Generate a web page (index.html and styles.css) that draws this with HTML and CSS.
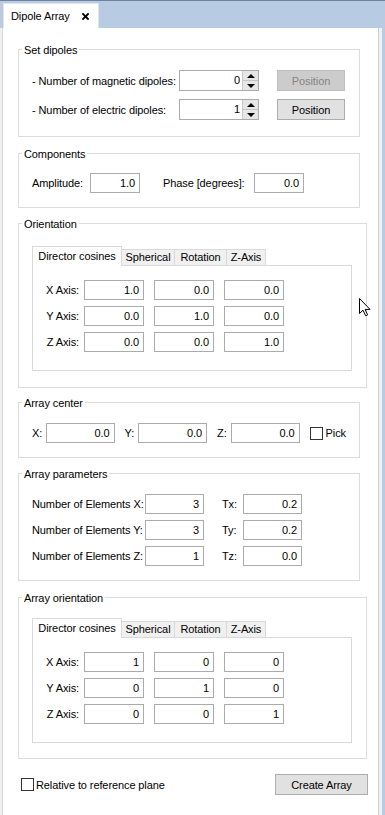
FILE: index.html
```html
<!DOCTYPE html>
<html>
<head>
<meta charset="utf-8">
<link rel="stylesheet" href="styles.css">
</head>
<body>
<div class="window">
  <div class="tabbar">
    <div class="tab">
      <span class="tab-text">Dipole Array</span>
      <svg class="close" width="7" height="7" viewBox="0 0 7 7"><path d="M1 1 L6 6 M6 1 L1 6" stroke="#000" stroke-width="1.8" stroke-linecap="square"/></svg>
    </div>
  </div>
  <div class="main">
    <div class="panel">

      <div class="group g-dipoles">
        <div class="title">Set dipoles</div>
        <div class="row dip-row first">
          <span class="lbl dip-lbl">- Number of magnetic dipoles:</span>
          <div class="spin"><span class="spin-val">0</span><div class="arrows"><span class="arr"><i class="tri up"></i></span><span class="arr"><i class="tri down"></i></span></div></div>
          <button class="btn pos disabled">Position</button>
        </div>
        <div class="row dip-row second">
          <span class="lbl dip-lbl">- Number of electric dipoles:</span>
          <div class="spin"><span class="spin-val">1</span><div class="arrows"><span class="arr"><i class="tri up"></i></span><span class="arr"><i class="tri down"></i></span></div></div>
          <button class="btn pos">Position</button>
        </div>
      </div>

      <div class="group g-comp">
        <div class="title">Components</div>
        <div class="row comp-row">
          <span class="lbl amp-lbl">Amplitude:</span>
          <div class="field f50">1.0</div>
          <span class="lbl phase-lbl">Phase [degrees]:</span>
          <div class="field f50">0.0</div>
        </div>
      </div>

      <div class="group wide g-orient">
        <div class="title">Orientation</div>
        <div class="tabwidget tw1">
          <div class="tabs">
            <div class="t active t-dc">Director cosines</div>
            <div class="t t-sph">Spherical</div>
            <div class="t t-rot">Rotation</div>
            <div class="t t-z">Z-Axis</div>
          </div>
          <div class="pane">
            <div class="row axis-row"><span class="lbl axis-lbl">X Axis:</span><div class="field f60">1.0</div><div class="field f60">0.0</div><div class="field f60">0.0</div></div>
            <div class="row axis-row"><span class="lbl axis-lbl">Y Axis:</span><div class="field f60">0.0</div><div class="field f60">1.0</div><div class="field f60">0.0</div></div>
            <div class="row axis-row"><span class="lbl axis-lbl">Z Axis:</span><div class="field f60">0.0</div><div class="field f60">0.0</div><div class="field f60">1.0</div></div>
          </div>
        </div>
      </div>

      <div class="group g-center">
        <div class="title">Array center</div>
        <div class="row center-row">
          <span class="lbl xyz-lbl">X:</span><div class="field f69">0.0</div>
          <span class="lbl xyz-lbl gap">Y:</span><div class="field f69">0.0</div>
          <span class="lbl xyz-lbl gap">Z:</span><div class="field f69">0.0</div>
          <span class="check pick-check"></span><span class="lbl pick-lbl">Pick</span>
        </div>
      </div>

      <div class="group g-params">
        <div class="title">Array parameters</div>
        <div class="row par-row"><span class="lbl num-lbl">Number of Elements X:</span><div class="field f59">3</div><span class="lbl t-lbl">Tx:</span><div class="field f59">0.2</div></div>
        <div class="row par-row"><span class="lbl num-lbl">Number of Elements Y:</span><div class="field f59">3</div><span class="lbl t-lbl">Ty:</span><div class="field f59">0.2</div></div>
        <div class="row par-row"><span class="lbl num-lbl">Number of Elements Z:</span><div class="field f59">1</div><span class="lbl t-lbl">Tz:</span><div class="field f59">0.0</div></div>
      </div>

      <div class="group wide g-aorient">
        <div class="title">Array orientation</div>
        <div class="tabwidget tw2">
          <div class="tabs">
            <div class="t active t-dc">Director cosines</div>
            <div class="t t-sph">Spherical</div>
            <div class="t t-rot">Rotation</div>
            <div class="t t-z">Z-Axis</div>
          </div>
          <div class="pane">
            <div class="row axis-row"><span class="lbl axis-lbl">X Axis:</span><div class="field f60">1</div><div class="field f60">0</div><div class="field f60">0</div></div>
            <div class="row axis-row"><span class="lbl axis-lbl">Y Axis:</span><div class="field f60">0</div><div class="field f60">1</div><div class="field f60">0</div></div>
            <div class="row axis-row"><span class="lbl axis-lbl">Z Axis:</span><div class="field f60">0</div><div class="field f60">0</div><div class="field f60">1</div></div>
          </div>
        </div>
      </div>

      <div class="bottom">
        <div class="rel"><span class="check"></span><span class="lbl rel-lbl">Relative to reference plane</span></div>
        <button class="btn create">Create Array</button>
      </div>

    </div>
    <div class="edge"></div>
  </div>
  <svg class="cursor" width="13" height="19" viewBox="0 0 13 19"><path d="M0.5 0.5 V15.5 L4 12.2 L6.6 17.8 L8.6 16.9 L6.1 11.4 H11 Z" fill="#fff" stroke="#000" stroke-width="1" stroke-linejoin="miter"/></svg>
</div>
</body>
</html>
```

FILE: styles.css
```css
* { box-sizing: border-box; }
html, body { margin: 0; padding: 0; }
body {
  font-family: "Liberation Sans", Arial, sans-serif;
  font-size: 11px;
  letter-spacing: -0.1px;
  color: #000;
  background: #fff;
}
.window {
  position: relative;
  width: 385px;
  height: 815px;
  overflow: hidden;
  background: #b7cbe3;
}
.tabbar {
  height: 28px;
  border-top: 1px solid #6f819c;
  background: #b7cbe3;
  padding: 2px 0 0 3px;
}
.tab {
  width: 96px;
  height: 25px;
  background: #fff;
  border: 1px solid #e4e4e4;
  border-bottom: none;
  display: flex;
  align-items: center;
  padding-left: 7px;
}
.tab-text { line-height: 14px; }
.close { margin-left: 12px; display: block; }

.main {
  display: flex;
  height: 787px;
  background: #f0f0f0;
}
.panel {
  width: 377px;
  margin-left: 2px;
  background: #fff;
  border-left: 1px solid #dadada;
  border-right: 1px solid #cfcfcf;
  padding-left: 15px;
}
.edge {
  width: 6px;
  background: #b7cbe3;
  border-left: 3px solid #f0f0f0;
}

.group {
  width: 342px;
  border: 1px solid #dcdcdc;
  padding: 0 13px;
}
.group.wide { width: 349px; }
.title {
  width: max-content;
  background: #fff;
  margin: -7px 0 0 -10px;
  padding: 0 2px;
  line-height: 14px;
  height: 14px;
}
.row { display: flex; align-items: center; }
.lbl { white-space: nowrap; line-height: 14px; }

.field {
  height: 20px;
  border: 1px solid #ababab;
  background: #fff;
  text-align: right;
  padding-right: 4px;
  line-height: 18px;
  flex: none;
}
.f50 { width: 50px; }
.f59 { width: 59px; }
.f60 { width: 60px; }
.f69 { width: 69px; }

/* Set dipoles */
.g-dipoles { margin-top: 21px; padding-bottom: 16px; }
.dip-row { height: 21px; }
.dip-row.first { margin-top: 13px; }
.dip-row.second { margin-top: 8px; }
.dip-lbl { width: 147px; }
.spin {
  width: 80px;
  height: 21px;
  border: 1px solid #ababab;
  display: flex;
  background: #fff;
}
.spin-val {
  flex: 1;
  text-align: right;
  padding-right: 2px;
  line-height: 19px;
}
.arrows {
  width: 16px;
  display: flex;
  flex-direction: column;
  background: #e6e6e6;
  border-left: 1px solid #c9c9c9;
}
.arr {
  flex: 1;
  display: flex;
  align-items: center;
  justify-content: center;
}
.arr + .arr { border-top: 1px solid #c4c4c4; }
.tri { display: block; width: 0; height: 0; border-left: 4px solid transparent; border-right: 4px solid transparent; }
.tri.up { border-bottom: 4px solid #000; }
.tri.down { border-top: 4px solid #000; }

.btn {
  font-family: inherit;
  font-size: 11px;
  letter-spacing: -0.1px;
  color: #000;
  background: #e1e1e1;
  border: 1px solid #adadad;
  height: 21px;
  padding: 0;
  margin: 0;
}
.pos { width: 68px; margin-left: 18px; }
.btn.disabled { background: #cccccc; border-color: #bfbfbf; color: #858585; }

/* Components */
.g-comp { margin-top: 16px; padding-bottom: 14px; }
.comp-row { margin-top: 12px; height: 20px; }
.amp-lbl { width: 58px; }
.phase-lbl { width: 91px; margin-left: 23px; }

/* Tab widgets */
.g-orient { margin-top: 15px; padding-bottom: 16px; }
.g-aorient { margin-top: 16px; padding-bottom: 15px; }
.tw1 { margin-top: 15px; }
.tw2 { margin-top: 13px; }
.tabs {
  display: flex;
  align-items: flex-end;
  height: 19px;
}
.t {
  height: 16px;
  background: #f0f0f0;
  border: 1px solid #d9d9d9;
  border-bottom: none;
  margin-left: -1px;
  text-align: center;
  line-height: 15px;
  white-space: nowrap;
}
.t.active {
  height: 20px;
  background: #fff;
  margin-left: 0;
  margin-bottom: -1px;
  position: relative;
  z-index: 1;
  line-height: 18px;
}
.t-dc { width: 90px; }
.t-sph { width: 54px; }
.t-rot { width: 53px; }
.t-z { width: 40px; }
.pane {
  width: 320px;
  border: 1px solid #d9d9d9;
  background: #fff;
  padding: 14px 0 18px 12px;
}
.axis-row { height: 20px; }
.axis-row + .axis-row { margin-top: 6px; }
.axis-lbl { width: 34px; text-align: right; margin-right: 5px; }
.axis-row .field + .field { margin-left: 10px; }

/* Array center */
.g-center { margin-top: 14px; padding-bottom: 14px; }
.center-row { margin-top: 13px; height: 20px; }
.xyz-lbl { width: 14px; }
.xyz-lbl.gap { margin-left: 10px; }
.check {
  display: block;
  width: 13px;
  height: 13px;
  border: 1px solid #333;
  background: #fff;
  flex: none;
}
.pick-check { margin-left: 10px; }
.pick-lbl { margin-left: 3px; }

/* Array parameters */
.g-params { margin-top: 15px; padding-bottom: 14px; }
.par-row { height: 20px; }
.par-row:nth-child(2) { margin-top: 13px; }
.par-row + .par-row { margin-top: 6px; }
.num-lbl { width: 113px; }
.t-lbl { width: 21px; margin-left: 18px; }

/* Bottom */
.bottom {
  margin-top: 15px;
  display: flex;
  justify-content: space-between;
  align-items: center;
  padding-left: 3px;
  padding-right: 10px;
}
.rel { display: flex; align-items: center; }
.rel-lbl { margin-left: 2px; }
.create { width: 93px; }

.cursor {
  position: absolute;
  left: 359px;
  top: 298px;
}
```
